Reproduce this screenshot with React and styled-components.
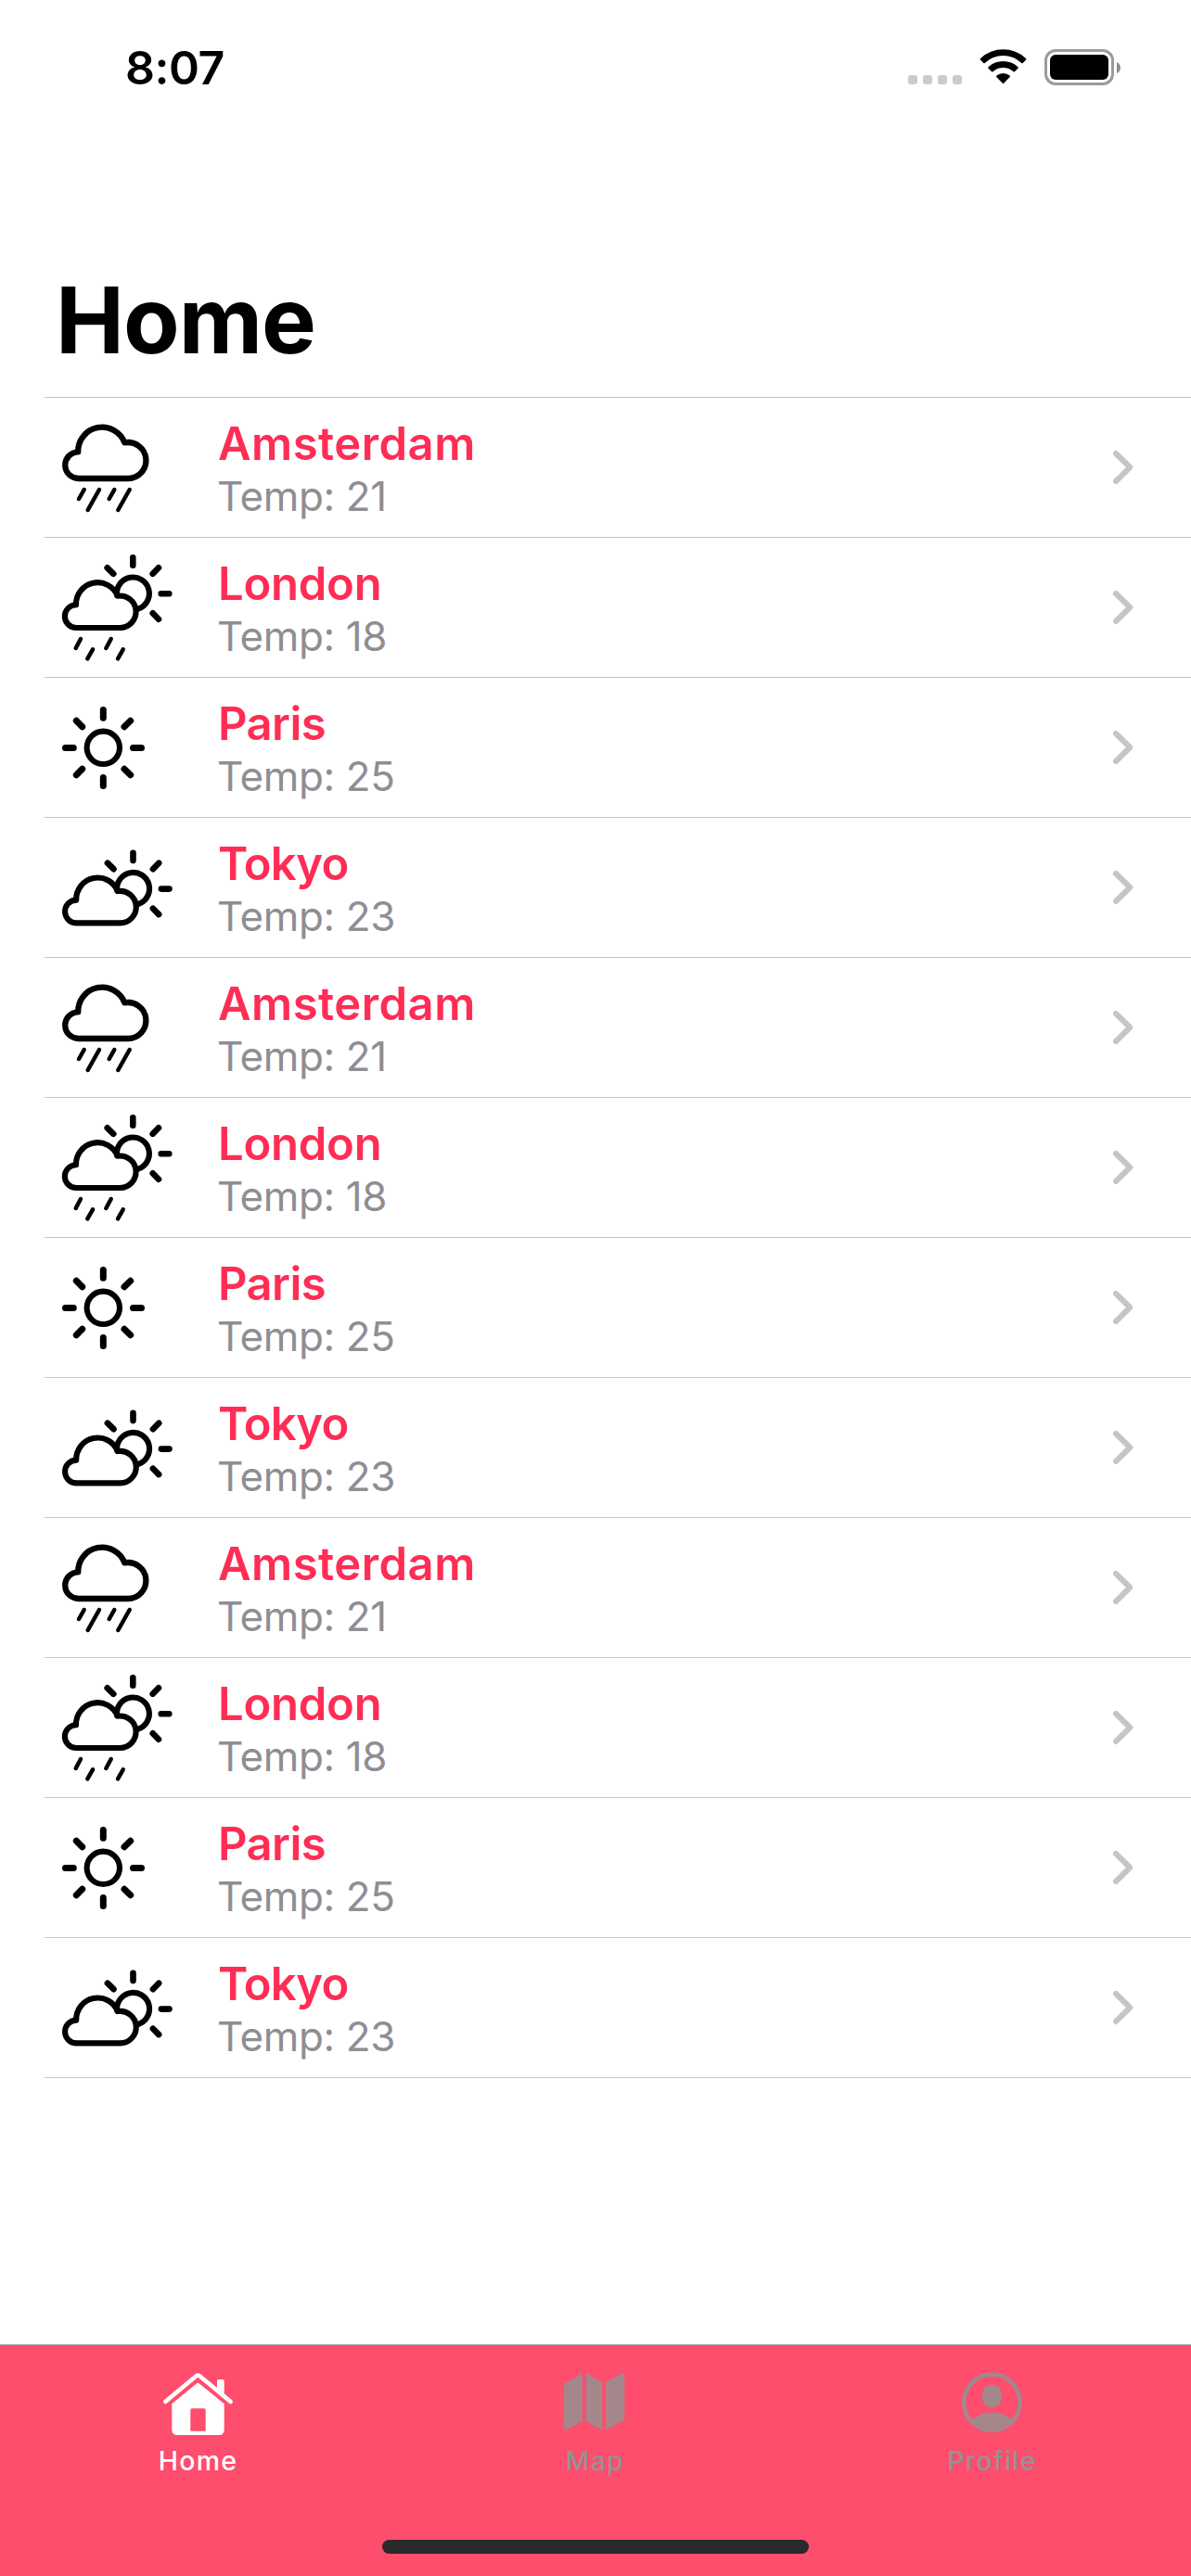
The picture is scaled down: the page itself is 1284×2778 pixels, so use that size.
import React from "react";
import styled, { createGlobalStyle } from "styled-components";

const GlobalStyle = createGlobalStyle`
  * { box-sizing: border-box; }
  body { margin: 0; background: #fff; }
`;

const Screen = styled.div`
  width: 1284px;
  height: 2778px;
  display: flex;
  flex-direction: column;
  background: #fff;
  font-family: Inter, "Liberation Sans", sans-serif;
  overflow: hidden;
`;

const StatusBar = styled.header`
  height: 141px;
  flex: none;
  display: flex;
  align-items: flex-start;
  justify-content: space-between;
  padding: 43px 76px 0 135px;
`;

const Clock = styled.time`
  font-size: 50px;
  line-height: 60px;
  font-weight: 600;
  letter-spacing: -0.5px;
  color: #000;
`;

const StatusIcons = styled.div`
  display: flex;
  align-items: flex-end;
  padding-top: 10px;
`;

const SignalDots = styled.div`
  display: flex;
  gap: 6px;
  margin: 0 19px 1px 0;
`;

const Dot = styled.span`
  width: 10px;
  height: 10px;
  border-radius: 3px;
  background: #cbcbcb;
`;

const WifiSvg = styled.svg`
  width: 51px;
  height: 38px;
  margin: 0 19px 1px 0;
`;

const Battery = styled.div`
  width: 75px;
  height: 39px;
  padding: 3px;
  border: 3px solid #9b9b9b;
  border-radius: 12px;
`;

const Charge = styled.div`
  height: 27px;
  background: #000;
  border-radius: 6px;
`;

const NubSvg = styled.svg`
  width: 4px;
  height: 12px;
  margin: 0 0 13px 3px;
`;

const Title = styled.h1`
  margin: 144px 0 23px 60px;
  font-size: 99px;
  line-height: 120px;
  font-weight: 700;
  letter-spacing: -1px;
  color: #000;
`;

const List = styled.ul`
  list-style: none;
  margin: 0 0 0 48px;
  padding: 0;
  border-top: 1px solid #c4c4c6;
`;

const Row = styled.li`
  height: 151px;
  display: flex;
  align-items: center;
  padding: 0 60px 0 12px;
  border-bottom: 1px solid #c4c4c6;
`;

const WeatherSvg = styled.svg`
  width: 130px;
  height: 150px;
  flex: none;
  fill: none;
  stroke: #000;
  stroke-linecap: round;
  stroke-linejoin: round;
`;

const CityText = styled.div`
  flex: 1;
  align-self: stretch;
  padding: 21px 0 0 45px;
`;

const City = styled.div`
  font-size: 49px;
  line-height: 58px;
  font-weight: 600;
  letter-spacing: ${(p) => p.$tracking}px;
  color: #ff2d55;
`;

const Temp = styled.div`
  margin: -1px 0 0 -1px;
  font-size: 44px;
  line-height: 56px;
  letter-spacing: -0.4px;
  color: #8e8e93;
`;

const ChevronSvg = styled.svg`
  width: 24px;
  height: 38px;
  fill: none;
  stroke: #c5c5c7;
  stroke-width: 6;
  stroke-linecap: round;
  stroke-linejoin: round;
`;

const TabBar = styled.nav`
  margin-top: auto;
  height: 250px;
  flex: none;
  display: flex;
  flex-direction: column;
  align-items: center;
  background: #ff4d6d;
  border-top: 1px solid #a9a9ab;
`;

const Tabs = styled.div`
  width: 100%;
  display: grid;
  grid-template-columns: repeat(3, 1fr);
`;

const Tab = styled.div`
  display: flex;
  flex-direction: column;
  align-items: center;
  padding-top: 26px;
  color: ${(p) => (p.$active ? "#fff" : "#a3878b")};
`;

const TabSvg = styled.svg`
  width: 80px;
  height: 76px;
`;

const TabLabel = styled.span`
  margin-top: 5px;
  padding-right: 1px;
  font-size: 28.5px;
  line-height: 36px;
  font-weight: 500;
  letter-spacing: 1.2px;
  color: ${(p) => (p.$active ? "#fff" : "#959293")};
`;

const HomeIndicator = styled.div`
  width: 460px;
  height: 15px;
  margin: auto 0 24px;
  border-radius: 8px;
  background: #2a2a2a;
`;

function SunBehindCloud() {
  return (
    <>
      <g strokeWidth="6.1">
        <path d="M22.5 97A12.4 12.4 0 0 1 22 72.2A23.2 23.2 0 0 1 66.7 62.7A17.25 17.25 0 1 1 69.5 97Z" />
        <path d="M66 62A17.5 17.5 0 1 1 88.8 76.6" />
      </g>
      <path
        strokeWidth="6.6"
        d="M83.3 21.3V29.7M113.7 60.2H122.3M55.7 32.3L62.3 38.8M111 32.3L104.7 38.8M104.7 81.3L111 87.7"
      />
    </>
  );
}

function RainIcon() {
  return (
    <WeatherSvg viewBox="0 0 130 150">
      <path
        strokeWidth="6.3"
        d="M25 87A14.35 14.35 0 0 1 24.2 58.3A25.9 25.9 0 0 1 74.3 48.4A19.47 19.47 0 1 1 78 87Z"
      />
      <path strokeWidth="4.5" d="M30.7 99L25 109M47 99L34.7 121M63.3 99L57.7 109M79.7 99L67.3 121" />
    </WeatherSvg>
  );
}

function SunRainIcon() {
  return (
    <WeatherSvg viewBox="0 0 130 150">
      <SunBehindCloud />
      <path
        strokeWidth="4.5"
        d="M27 109L21.7 119M40 120.3L34.3 130.3M59.7 109L54.3 119M72.7 120.3L67 130.3"
      />
    </WeatherSvg>
  );
}

function SunIcon() {
  return (
    <WeatherSvg viewBox="0 0 130 150">
      <circle cx="51.3" cy="75.3" r="17.7" strokeWidth="6.1" />
      <path
        strokeWidth="7"
        d="M51.3 34.5V43.2M51.3 107.5V116.5M10.5 75.5H19.3M83.5 75.5H92.5M22.3 46.3L28.7 52.7M80.7 46.3L74 52.7M22.3 104.7L28.7 98.3M80.7 104.7L74 98.3"
      />
    </WeatherSvg>
  );
}

function CloudSunIcon() {
  return (
    <WeatherSvg viewBox="0 0 130 150">
      <g transform="translate(0.2 16.4)">
        <SunBehindCloud />
      </g>
    </WeatherSvg>
  );
}

function HomeIcon() {
  return (
    <TabSvg viewBox="0 0 80 76">
      <path
        d="M4.3 35.1L37.6 7.2Q39.4 5.8 41.2 7.2L74.6 35.1"
        fill="none"
        stroke="currentColor"
        strokeWidth="4.6"
        strokeLinecap="round"
      />
      <path d="M60 24V13Q60 11 62 11H65.7Q67.7 11 67.7 13V29.5Z" fill="currentColor" />
      <path
        fillRule="evenodd"
        fill="currentColor"
        d="M38.2 15.3Q39.4 14.3 40.6 15.3L67.7 37.3V65Q67.7 71 61.7 71H17.3Q11.3 71 11.3 65V37.3ZM33 42.3Q31.3 42.3 31.3 44V66.7H47.7V44Q47.7 42.3 46 42.3Z"
      />
    </TabSvg>
  );
}

function MapIcon() {
  return (
    <TabSvg viewBox="0 0 80 76" fill="currentColor">
      <path d="M26 4.2V56.6L9.8 64.6Q6 66 6 62V18Q6 15.8 7.8 14.7Z" />
      <path d="M30 4L47.3 14V65.7L30 56.3Z" />
      <path d="M51.3 13.8L67.5 5Q71.3 3.6 71.3 7.6V52.6Q71.3 54.3 70 55.1L51.3 65.7Z" />
    </TabSvg>
  );
}

function ProfileIcon() {
  return (
    <TabSvg viewBox="0 0 80 76" fill="currentColor">
      <circle cx="39.4" cy="35.7" r="30.2" fill="none" stroke="currentColor" strokeWidth="4.7" />
      <ellipse cx="39.4" cy="29" rx="11" ry="12.2" />
      <path d="M18.3 54.5C23 49.5 30.5 46.4 39.4 46.4S55.8 49.5 60.4 54.5A29 29 0 0 1 18.3 54.5Z" />
    </TabSvg>
  );
}

const forecast = [
  { city: "Amsterdam", temp: 21, tracking: 0.45, Icon: RainIcon },
  { city: "London", temp: 18, tracking: -0.25, Icon: SunRainIcon },
  { city: "Paris", temp: 25, tracking: -0.6, Icon: SunIcon },
  { city: "Tokyo", temp: 23, tracking: -0.75, Icon: CloudSunIcon },
];
const rows = [...forecast, ...forecast, ...forecast];

const tabs = [
  { label: "Home", Icon: HomeIcon, active: true },
  { label: "Map", Icon: MapIcon },
  { label: "Profile", Icon: ProfileIcon },
];

export default function App() {
  return (
    <Screen>
      <GlobalStyle />
      <StatusBar>
        <Clock>8:07</Clock>
        <StatusIcons>
          <SignalDots>
            <Dot />
            <Dot />
            <Dot />
            <Dot />
          </SignalDots>
          <WifiSvg viewBox="0 0 51 38">
            <path d="M0.9 11.4Q0.2 10.6 1 9.9A36 36 0 0 1 50 9.9Q50.8 10.6 50.1 11.4L46.7 14.9Q46 15.5 45.3 14.9A29 29 0 0 0 5.7 14.9Q5 15.5 4.3 14.9Z" />
            <path d="M9.4 20.6Q8.8 19.9 9.5 19.2A23.6 23.6 0 0 1 41.5 19.2Q42.2 19.9 41.6 20.6L37.9 24.2Q37.3 24.8 36.6 24.2A16.5 16.5 0 0 0 14.4 24.2Q13.7 24.8 13.1 24.2Z" />
            <path d="M18.2 29.9Q17.6 29.2 18.4 28.6A11.3 11.3 0 0 1 32.6 28.6Q33.4 29.2 32.8 29.9L26.2 36.7Q25.5 37.4 24.8 36.7Z" />
          </WifiSvg>
          <Battery>
            <Charge />
          </Battery>
          <NubSvg viewBox="0 0 4 12">
            <path d="M0 0C5.3 2.4 5.3 9.6 0 12Z" fill="#8c8c8c" />
          </NubSvg>
        </StatusIcons>
      </StatusBar>
      <Title>Home</Title>
      <List>
        {rows.map(({ city, temp, tracking, Icon }, i) => (
          <Row key={i}>
            <Icon />
            <CityText>
              <City $tracking={tracking}>{city}</City>
              <Temp>Temp: {temp}</Temp>
            </CityText>
            <ChevronSvg viewBox="0 0 24 38">
              <path d="M3 4L18.3 19L3 34" />
            </ChevronSvg>
          </Row>
        ))}
      </List>
      <TabBar>
        <Tabs>
          {tabs.map(({ label, Icon, active }) => (
            <Tab key={label} $active={active}>
              <Icon />
              <TabLabel $active={active}>{label}</TabLabel>
            </Tab>
          ))}
        </Tabs>
        <HomeIndicator />
      </TabBar>
    </Screen>
  );
}
